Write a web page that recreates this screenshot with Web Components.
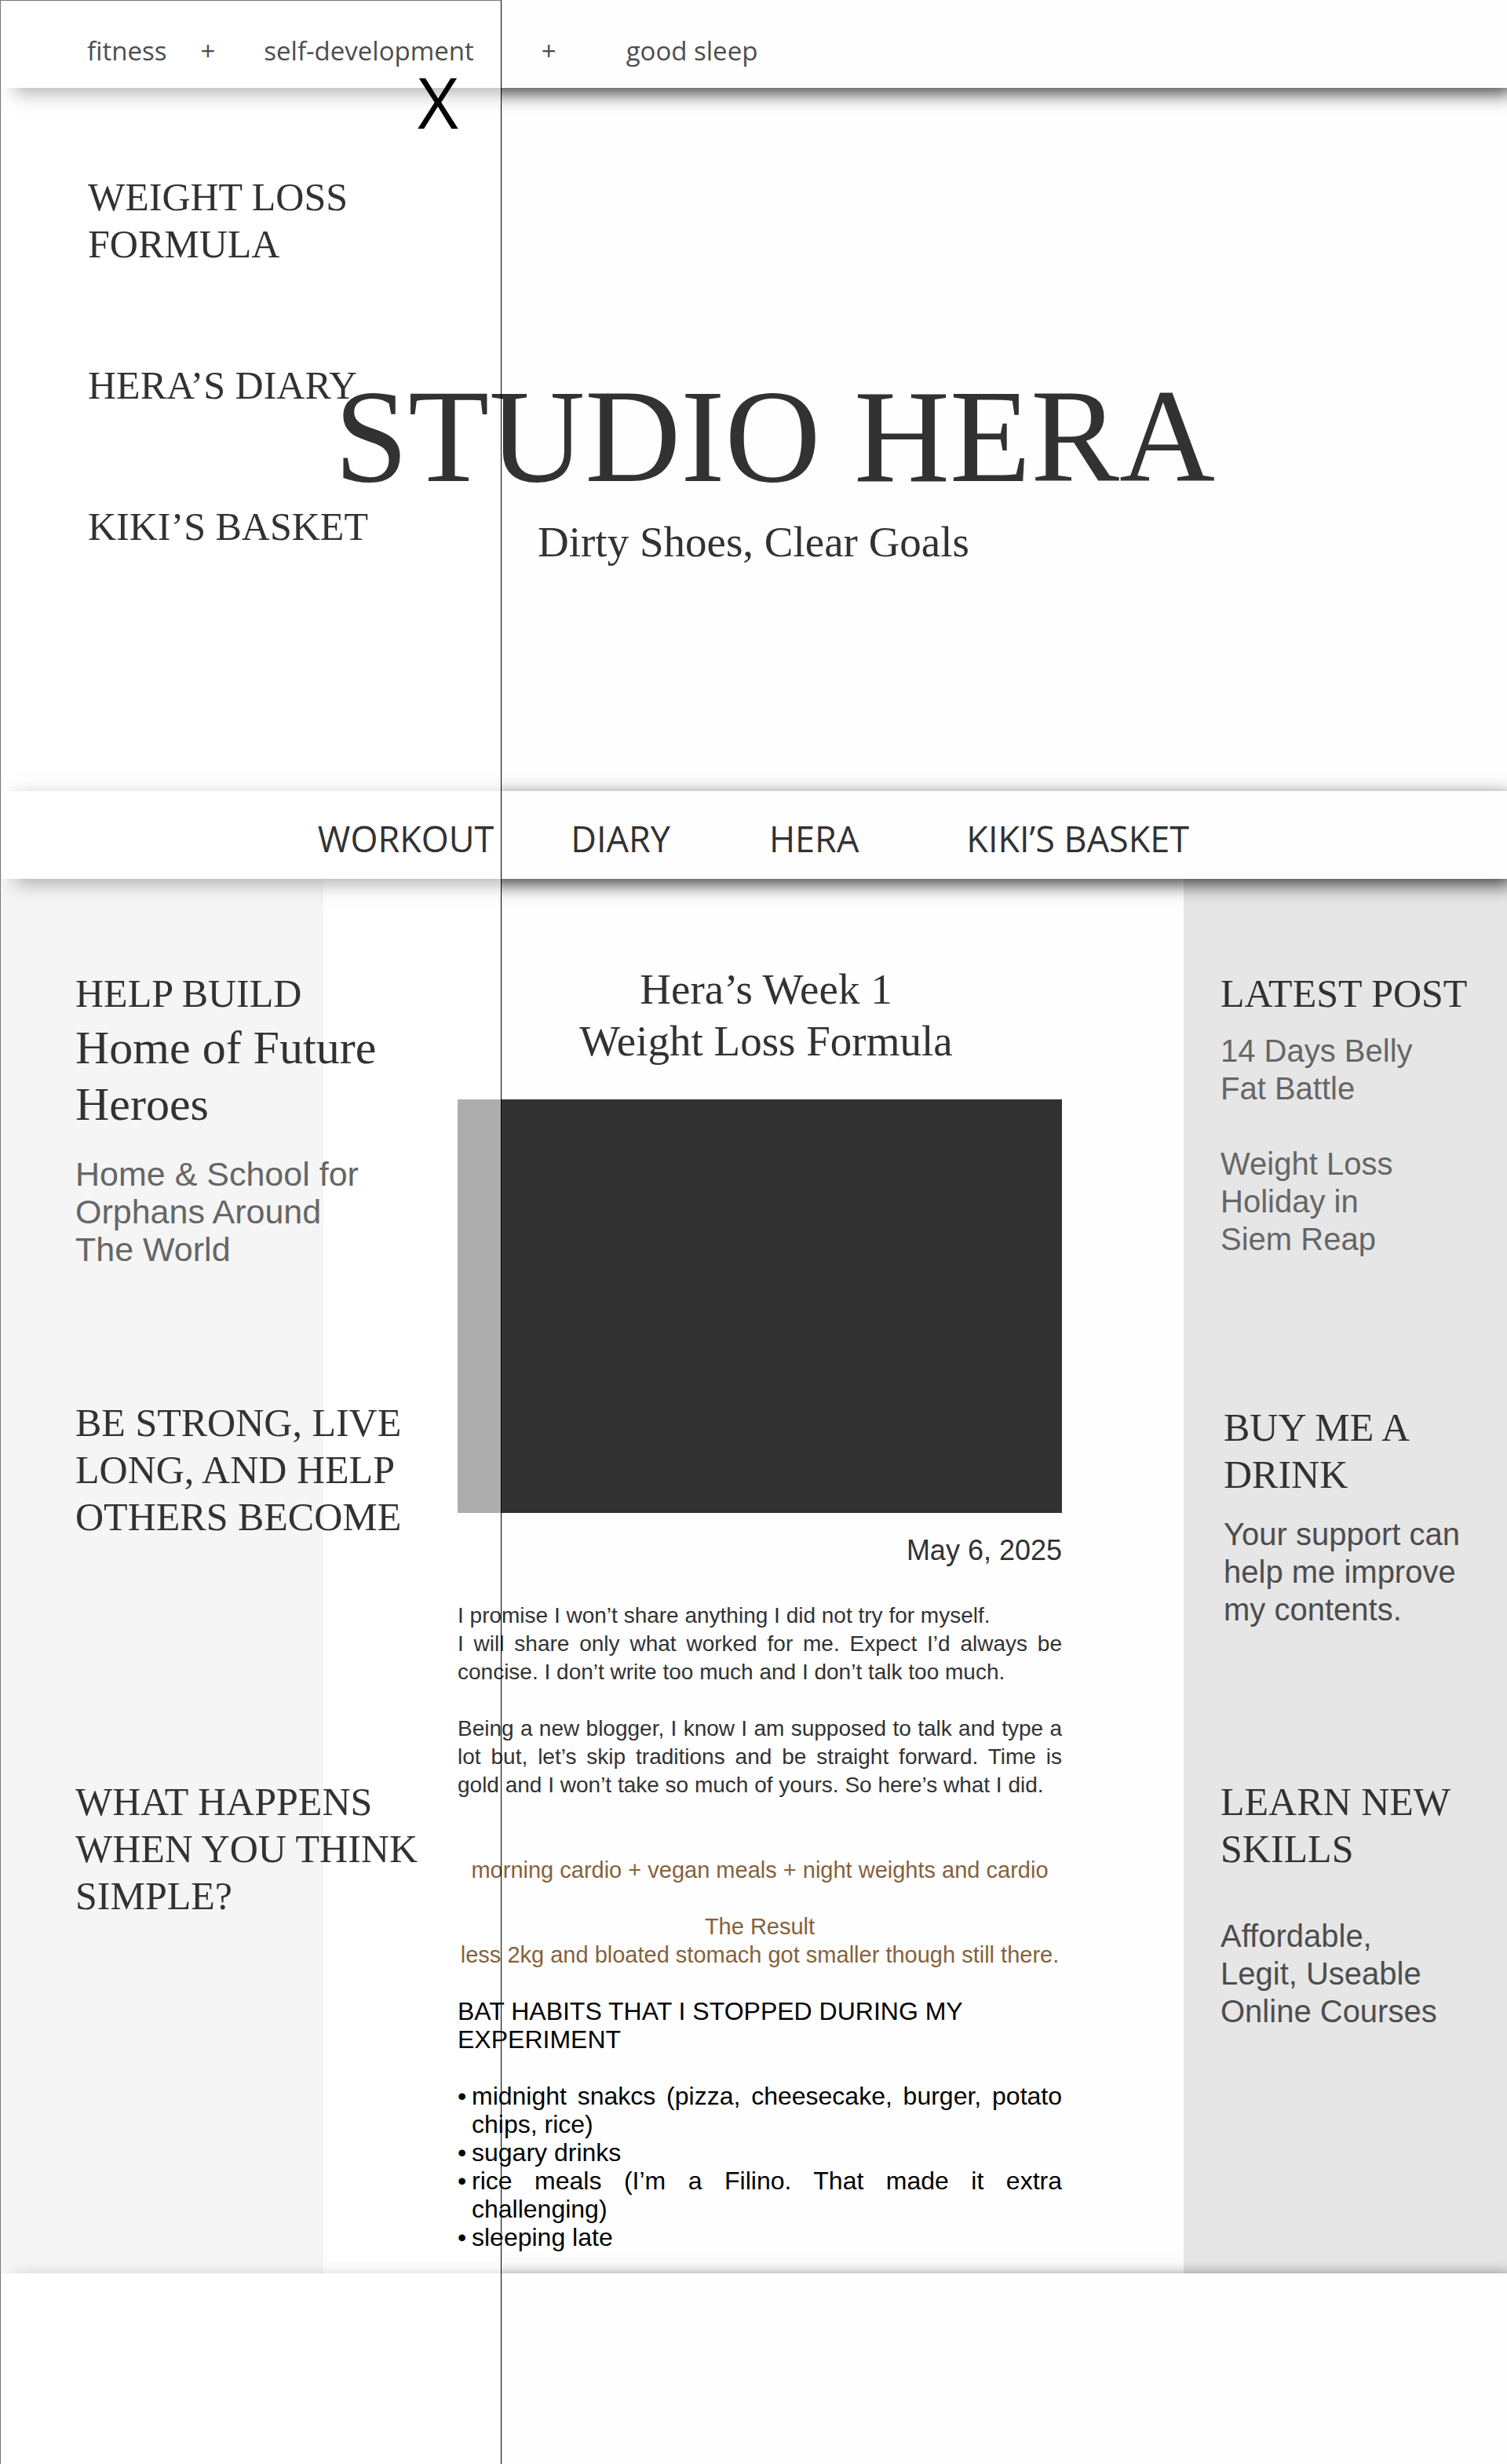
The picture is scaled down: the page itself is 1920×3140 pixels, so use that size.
<!DOCTYPE html>
<html lang="en">
<head>
<meta charset="utf-8">
<meta name="viewport" content="width=device-width, initial-scale=1">
<title>Studio Hera</title>
<style>
  body { margin: 0; background: #fefefe; }
</style>
</head>
<body>
<hera-page>
  <hera-topics slot="top"></hera-topics>
  <hera-hero slot="hero">
    <span slot="name">STUDIO HERA</span>
    <span slot="tagline">Dirty Shoes, Clear Goals</span>
  </hera-hero>
  <hera-nav slot="nav"></hera-nav>
  <hera-causes slot="start"></hera-causes>
  <hera-article slot="main"></hera-article>
  <hera-offers slot="end"></hera-offers>
  <hera-drawer slot="drawer"></hera-drawer>
</hera-page>

<script>
/* Layers: shapes 0, drawer veil 1, text 2, drawer outline 3. */
const base = `
  *, *::before, *::after { box-sizing: border-box; }
  :host { display: block; }
  h1, h2, h3, p, ul, figure { margin: 0; padding: 0; font-weight: 400; }
  ul { list-style: none; }
  a { color: inherit; text-decoration: none; }
  .text { position: relative; z-index: 2; }
  .heading { font: 50px/60px "Liberation Serif", serif; color: #323232; }
`;
const define = (name, css, html) => {
  customElements.define(name, class extends HTMLElement {
    constructor() {
      super();
      this.attachShadow({ mode: 'open' }).innerHTML = `<style>${base}${css}</style>${html}`;
    }
  });
};

/* The shadow starts a little inside the left edge; the bar's own fill covers the full width. */
define('hera-bar', `
  :host { position: relative; }
  .shade, .fill { position: absolute; inset: 0; }
  .shade { left: 12px; box-shadow: 7px 7px 22px rgba(0, 0, 0, .75); }
  .fill { background: #fefefe; }
`, `<div class="shade"></div><div class="fill"></div><slot></slot>`);

define('hera-page', `
  :host { position: relative; display: flex; flex-direction: column;
          min-height: 100vh; overflow: hidden; background: #fefefe; }
  .columns { display: grid; grid-template-columns: 412px 1fr 412px; }
  .foot { flex: 1; }
`, `
  <header><slot name="top"></slot><slot name="hero"></slot><slot name="nav"></slot></header>
  <main class="columns"><slot name="start"></slot><slot name="main"></slot><slot name="end"></slot></main>
  <hera-bar class="foot"></hera-bar>
  <slot name="drawer"></slot>
`);

define('hera-topics', `
  ul { display: flex; padding: 41px 0 23px 111px;
       font: 33px/48px "Open Sans", sans-serif; color: #4d4d4d; }
  .near { margin: 0 62px 0 43px; }
  .far { margin: 0 89px 0 86px; }
`, `
  <hera-bar><ul class="text">
    <li>fitness</li><li class="near">+</li><li>self-development</li><li class="far">+</li><li>good sleep</li>
  </ul></hera-bar>
`);

define('hera-hero', `
  :host { padding: 344px 0 284px; text-align: center; color: #323232;
          font-family: "Liberation Serif", serif; }
  h1 { font-size: 169px; line-height: 200px; padding-left: 54px; }
  p { margin-top: 2px; font-size: 55px; line-height: 66px; }
`, `
  <h1 class="text"><slot name="name"></slot></h1>
  <p class="text"><slot name="tagline"></slot></p>
`);

define('hera-nav', `
  nav { display: flex; justify-content: center; padding: 31px 0 21px;
        font: 45px/60px "Open Sans", sans-serif; color: #323232; }
  .diary { margin: 0 126px 0 98px; }
  .basket { margin-left: 137px; }
`, `
  <hera-bar><nav class="text" aria-label="Sections">
    <a href="#workout">WORKOUT</a><a class="diary" href="#diary">DIARY</a><a href="#hera">HERA</a><a class="basket" href="#basket">KIKI’S BASKET</a>
  </nav></hera-bar>
`);

define('hera-causes', `
  :host { background: #e6e6e6; padding: 116px 0 0 96px; white-space: nowrap; }
  .large { margin-top: 3px; font: 60px/72px "Liberation Serif", serif; color: #323232; }
  .note { margin-top: 29px; font: 43px/48px "Liberation Sans", sans-serif; color: #666; }
  .strong { margin-top: 167px; }
  .simple { margin-top: 303px; }
`, `
  <h2 class="text heading">HELP BUILD</h2>
  <p class="text large">Home of Future<br>Heroes</p>
  <p class="text note">Home &amp; School for<br>Orphans Around<br>The World</p>
  <h2 class="text heading strong">BE STRONG, LIVE<br>LONG, AND HELP<br>OTHERS BECOME</h2>
  <h2 class="text heading simple">WHAT HAPPENS<br>WHEN YOU THINK<br>SIMPLE?</h2>
`);

define('hera-offers', `
  :host { background: #e6e6e6; padding: 116px 0 0 47px; white-space: nowrap; }
  .copy { font: 40px/48px "Liberation Sans", sans-serif; color: #4d4d4d; }
  .posts { display: grid; gap: 48px; margin-top: 19px; color: #666; }
  .drink { margin: 186px 0 191px; padding-left: 4px; }
  .drink .copy { margin-top: 22px; }
  .skills .copy { margin-top: 57px; }
`, `
  <section>
    <h2 class="text heading">LATEST POST</h2>
    <ul class="text copy posts">
      <li><a href="#belly">14 Days Belly<br>Fat Battle</a></li>
      <li><a href="#holiday">Weight Loss<br>Holiday in<br>Siem Reap</a></li>
    </ul>
  </section>
  <section class="drink">
    <h2 class="text heading">BUY ME A<br>DRINK</h2>
    <p class="text copy">Your support can<br>help me improve<br>my contents.</p>
  </section>
  <section class="skills">
    <h2 class="text heading">LEARN NEW<br>SKILLS</h2>
    <p class="text copy">Affordable,<br>Legit, Useable<br>Online Courses</p>
  </section>
`);

define('hera-article', `
  :host { padding: 108px 155px 28px 171px; font: 28px/36px "Liberation Sans", sans-serif; color: #323232; }
  h2 { font: 55px/66px "Liberation Serif", serif; text-align: center; padding-left: 16px; }
  figure { margin: 41px 0 30px; aspect-ratio: 770 / 527; background: #323232; }
  .date { display: block; text-align: right; font-size: 36px; margin-bottom: 47px; }
  .body { text-align: justify; margin-bottom: 36px; }
  .keep { white-space: nowrap; }
  .result { text-align: center; font-size: 29px; color: #85623a; margin-bottom: 36px; }
  .first { margin-top: 72px; }
  .habits { font-size: 32px; color: #000; }
  h3 { font-size: 32px; margin-bottom: 36px; }
  li { display: grid; grid-template-columns: 18px 1fr; text-align: justify; }
  li::before { content: "•"; }
`, `
  <article>
    <h2 class="text">Hera’s Week 1<br>Weight Loss Formula</h2>
    <figure role="img" aria-label="Photo"></figure>
    <time class="text date" datetime="2025-05-06">May 6, 2025</time>
    <p class="text body">I promise I won’t share anything I did not try for myself.<br>I will share only what worked for me. Expect I’d always be concise. I don’t write too much and I don’t talk too much.</p>
    <p class="text body">Being a new blogger, I know I am supposed to talk and type a lot but, let’s skip traditions and be straight forward. Time is <span class="keep">gold and</span> I won’t take so much of yours. So here’s what I did.</p>
    <p class="text result first">morning cardio + vegan meals + night weights and cardio</p>
    <p class="text result">The Result<br>less 2kg and bloated stomach got smaller though still there.</p>
    <section class="text habits">
      <h3>BAT HABITS THAT I STOPPED DURING MY EXPERIMENT</h3>
      <ul>
        <li>midnight snakcs (pizza, cheesecake, burger, potato chips, rice)</li>
        <li>sugary drinks</li>
        <li>rice meals (I’m a Filino. That made it extra challenging)</li>
        <li>sleeping late</li>
      </ul>
    </section>
  </article>
`);

define('hera-drawer', `
  :host { position: absolute; top: 0; bottom: 0; left: 0; width: 639px; }
  .veil, .outline { position: absolute; inset: 0; pointer-events: none; }
  .veil { z-index: 1; background: rgba(255, 255, 255, .6); }
  .outline { z-index: 3; border: solid #777; border-width: 1px 1px 0 1px; border-right-color: #000; }
  .content { display: flex; flex-direction: column; padding: 79px 55px 0 112px; }
  button { align-self: flex-end; border: 0; padding: 0; background: none; color: #000;
           font: 90px/100px "Open Sans", sans-serif; cursor: pointer; }
  nav { display: grid; gap: 120px; margin-top: 42px; }
`, `
  <div class="veil"></div>
  <div class="text content">
    <button type="button" aria-label="Close menu">X</button>
    <nav class="heading" aria-label="Menu">
      <a href="#formula">WEIGHT LOSS<br>FORMULA</a>
      <a href="#diary">HERA’S DIARY</a>
      <a href="#basket">KIKI’S BASKET</a>
    </nav>
  </div>
  <div class="outline"></div>
`);
</script>
</body>
</html>
